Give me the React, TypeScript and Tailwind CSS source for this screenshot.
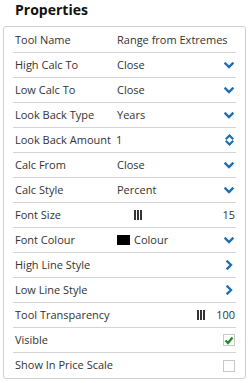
import React from "react";

const Down = () => (
  <svg width="10" height="7" viewBox="0 0 10 7">
    <polyline points="1.5,1.5 5,5 8.5,1.5" fill="none" stroke="#1f6fb2" strokeWidth="2.4" strokeLinecap="square" />
  </svg>
);
const Right = () => (
  <svg width="7" height="10" viewBox="0 0 7 10">
    <polyline points="1.5,1.5 5,5 1.5,8.5" fill="none" stroke="#1f6fb2" strokeWidth="2.4" strokeLinecap="square" />
  </svg>
);
const UpDown = () => (
  <svg width="9" height="12" viewBox="0 0 9 12">
    <polyline points="1.5,4.5 4.5,1.5 7.5,4.5" fill="none" stroke="#1f6fb2" strokeWidth="2.2" strokeLinecap="square" />
    <polyline points="1.5,7.5 4.5,10.5 7.5,7.5" fill="none" stroke="#1f6fb2" strokeWidth="2.2" strokeLinecap="square" />
  </svg>
);
const Bars = () => (
  <span className="flex gap-[1px] items-center h-[10px]">
    <span className="w-[2px] h-[10px] bg-[#333]" />
    <span className="w-[2px] h-[10px] bg-[#333]" />
    <span className="w-[2px] h-[10px] bg-[#333]" />
  </span>
);

type RowProps = { label: string; children?: React.ReactNode; last?: boolean };
const Row = ({ label, children, last }: RowProps) => (
  <div className={`h-[25px] flex items-center ${last ? "" : "border-b border-[#d4d4d4]"}`}>
    <div className="w-[104px] pl-[2px] shrink-0 whitespace-nowrap">{label}</div>
    <div className="flex-1 flex items-center min-w-0">{children}</div>
  </div>
);

const Select = ({ v }: { v: string }) => (
  <>
    <span className="flex-1">{v}</span>
    <span className="pr-[2px] flex items-center">
      <Down />
    </span>
  </>
);

export default function App() {
  return (
    <div
      className="w-[250px] h-[383px] bg-white text-[#333] text-[11px]"
      style={{ fontFamily: '"Open Sans", "Noto Sans", sans-serif' }}
    >
      <div className="h-[26px] pl-[15px] text-[14px] font-bold text-[#111] leading-[20px]">Properties</div>
      <div className="ml-[3px] w-[243px] border border-[#cfcfcf] rounded-[3px] px-[9px] pt-[1px]">
        <Row label="Tool Name">
          <span className="whitespace-nowrap">Range from Extremes</span>
        </Row>
        <Row label="High Calc To"><Select v="Close" /></Row>
        <Row label="Low Calc To"><Select v="Close" /></Row>
        <Row label="Look Back Type"><Select v="Years" /></Row>
        <Row label="Look Back Amount">
          <span className="flex-1 -ml-[1px]">1</span>
          <span className="pr-[2px] flex items-center"><UpDown /></span>
        </Row>
        <Row label="Calc From"><Select v="Close" /></Row>
        <Row label="Calc Style"><Select v="Percent" /></Row>
        <Row label="Font Size">
          <span className="flex-1 pl-[17px]"><Bars /></span>
          <span className="pr-[1px]">15</span>
        </Row>
        <Row label="Font Colour">
          <span className="w-[13px] h-[10px] bg-black mr-[4px]" />
          <span className="flex-1">Colour</span>
          <span className="pr-[2px] flex items-center"><Down /></span>
        </Row>
        <Row label="High Line Style">
          <span className="flex-1" />
          <span className="pr-[3px] flex items-center"><Right /></span>
        </Row>
        <Row label="Low Line Style">
          <span className="flex-1" />
          <span className="pr-[3px] flex items-center"><Right /></span>
        </Row>
        <Row label="Tool Transparency">
          <span className="flex-1" />
          <span className="mr-[11px]"><Bars /></span>
          <span className="pr-[1px]">100</span>
        </Row>
        <Row label="Visible">
          <span className="flex-1" />
          <span className="w-[12px] h-[12px] border border-[#c8c8c8] flex items-center justify-center mr-[1px]">
            <svg width="10" height="9" viewBox="0 0 10 9">
              <polyline points="1.5,4.5 4,7 8.5,1.5" fill="none" stroke="#1f8a1f" strokeWidth="2.2" />
            </svg>
          </span>
        </Row>
        <Row label="Show In Price Scale" last>
          <span className="flex-1" />
          <span className="w-[12px] h-[12px] border border-[#c8c8c8] mr-[1px]" />
        </Row>
      </div>
    </div>
  );
}
